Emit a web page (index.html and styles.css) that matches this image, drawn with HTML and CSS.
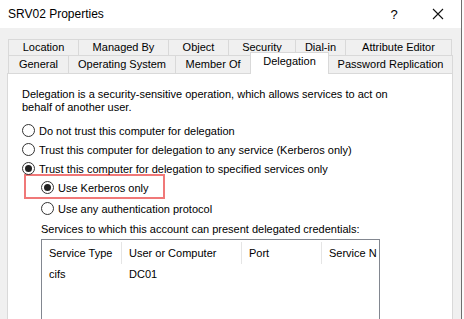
FILE: index.html
```html
<!DOCTYPE html>
<html lang="en">
<head>
    <meta charset="UTF-8">
    <title>SRV02 Properties</title>
    <link rel="stylesheet" href="styles.css">
</head>
<body>
    <div class="window">
        <div class="titlebar">
            <span class="title">SRV02 Properties</span>
            <span class="help">?</span>
            <span class="close">
                <svg width="12" height="12" viewBox="0 0 12 12"><path d="M1 1 L11 11 M11 1 L1 11" stroke="#111" stroke-width="1.1" fill="none"/></svg>
            </span>
        </div>

        <div class="dialog">
            <div class="tabs">
                <div class="tabrow row1">
                    <div class="tab w70">Location</div>
                    <div class="tab w90">Managed By</div>
                    <div class="tab w60">Object</div>
                    <div class="tab w67">Security</div>
                    <div class="tab w50">Dial-in</div>
                    <div class="tab w106">Attribute Editor</div>
                </div>
                <div class="tabrow row2">
                    <div class="tab w60">General</div>
                    <div class="tab w107">Operating System</div>
                    <div class="tab w75">Member Of</div>
                    <div class="tab w78 active">Delegation</div>
                    <div class="tab w124">Password Replication</div>
                </div>
            </div>

            <div class="panel">
                <p class="intro">Delegation is a security-sensitive operation, which allows services to act on behalf of another user.</p>

                <div class="option"><span class="radio"></span>Do not trust this computer for delegation</div>
                <div class="option"><span class="radio"></span>Trust this computer for delegation to any service (Kerberos only)</div>
                <div class="option"><span class="radio checked"></span>Trust this computer for delegation to specified services only</div>

                <div class="highlight">
                    <div class="option"><span class="radio checked"></span>Use Kerberos only</div>
                </div>
                <div class="option sub"><span class="radio"></span>Use any authentication protocol</div>

                <div class="services-label">Services to which this account can present delegated credentials:</div>

                <div class="listbox">
                    <div class="listrow header">
                        <div class="col c1">Service Type</div>
                        <div class="col c2">User or Computer</div>
                        <div class="col c3">Port</div>
                        <div class="col c4">Service N</div>
                    </div>
                    <div class="listrow">
                        <div class="col c1">cifs</div>
                        <div class="col c2">DC01</div>
                        <div class="col c3"></div>
                        <div class="col c4"></div>
                    </div>
                </div>
            </div>
        </div>
    </div>
</body>
</html>
```

FILE: styles.css
```css
body {
    margin: 0;
    background: #fafafa;
    font-family: "Liberation Sans", Arial, sans-serif;
    font-size: 11px;
    color: #000;
    overflow: hidden;
}
.window {
    width: 461px;
    height: 319px;
    border-right: 1px solid #6e6e6e;
    background: #f0f0f0;
    overflow: hidden;
}
.titlebar {
    height: 28px;
    background: #fff;
    display: flex;
    align-items: center;
    font-size: 12px;
}
.title {
    margin-left: 8px;
    flex: 1;
}
.help {
    width: 14px;
    text-align: center;
    margin-right: 31px;
    font-size: 13px;
}
.close {
    width: 12px;
    height: 12px;
    margin-right: 17px;
    display: flex;
}
.dialog {
    padding-top: 11px;
}
.tabs {
    margin-left: 8px;
}
.tabrow {
    display: flex;
}
.tab {
    box-sizing: border-box;
    border: 1px solid #d9d9d9;
    border-bottom: none;
    margin-right: -1px;
    text-align: center;
    background: #f0f0f0;
}
.row1 .tab {
    height: 16px;
    line-height: 15px;
}
.row2 .tab {
    height: 18px;
    line-height: 17px;
}
.tab.active {
    background: #fff;
    height: 22px;
    line-height: 17px;
    margin-top: -3px;
    margin-bottom: -1px;
    position: relative;
    z-index: 1;
}
.w50 { width: 51px; }
.w60 { width: 61px; }
.w67 { width: 68px; }
.w70 { width: 71px; }
.w75 { width: 76px; }
.w78 { width: 79px; }
.w90 { width: 91px; }
.w106 { width: 107px; }
.w107 { width: 108px; }
.w124 { width: 125px; }

.panel {
    margin-left: 7px;
    width: 446px;
    height: 260px;
    box-sizing: border-box;
    background: #fff;
    border: 1px solid #d9d9d9;
    padding: 14px 0 0 14px;
}
.intro {
    margin: 0 0 7px;
    width: 370px;
    line-height: 13px;
}
.option {
    display: flex;
    align-items: center;
    height: 19px;
}
.radio {
    box-sizing: border-box;
    width: 13px;
    height: 13px;
    border: 1px solid #333;
    border-radius: 50%;
    margin-right: 4px;
    display: flex;
    align-items: center;
    justify-content: center;
}
.radio.checked::after {
    content: "";
    width: 7px;
    height: 7px;
    border-radius: 50%;
    background: #222;
}
.highlight {
    box-sizing: border-box;
    width: 141px;
    height: 25px;
    margin: -4px 0 0 2px;
    padding: 2px 0 0 15px;
    border: 2px solid #f07878;
    display: flex;
    align-items: center;
}
.sub {
    margin-left: 19px;
}
.services-label {
    margin: 4px 0 0 19px;
    height: 17px;
    line-height: 15px;
}
.listbox {
    margin-left: 19px;
    width: 339px;
    height: 90px;
    box-sizing: border-box;
    border: 1px solid #828790;
    overflow: hidden;
}
.listrow {
    display: flex;
    height: 18px;
    line-height: 18px;
}
.listrow.header {
    height: 25px;
    line-height: 25px;
}
.col {
    box-sizing: border-box;
    padding-left: 7px;
    white-space: nowrap;
    overflow: hidden;
}
.header .col {
    border-right: 1px solid #e5e5e5;
    margin: 2px 0 1px;
    line-height: 22px;
}
.c1 { width: 80px; }
.c2 { width: 120px; }
.c3 { width: 80px; }
.c4 { width: 57px; }
.header .c4 { border-right: none; }
```
